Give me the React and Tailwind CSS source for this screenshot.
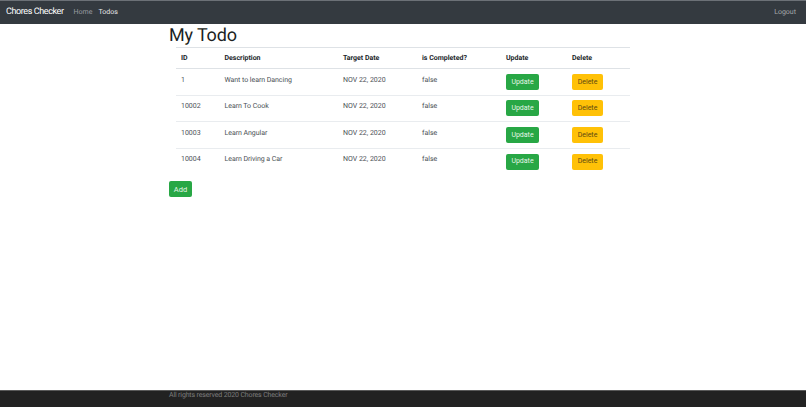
const rows = [
  ["1", "Want to learn Dancing"],
  ["10002", "Learn To Cook"],
  ["10003", "Learn Angular"],
  ["10004", "Learn Driving a Car"],
];

const heads = [
  ["ID", "w-[43.5px]"],
  ["Description", "w-[118.5px]"],
  ["Target Date", "w-[79px]"],
  ["is Completed?", "w-[84px]"],
  ["Update", "w-[66px]"],
  ["Delete", "w-[63px]"],
];

export default function App() {
  return (
    <div className="flex h-[407px] flex-col overflow-hidden bg-white font-['Roboto','Noto_Sans',sans-serif] text-[#212529] [text-rendering:geometricPrecision]">
      <nav className="flex h-6 shrink-0 items-center border-t border-[#6c7177] bg-[#343a40] pl-[6px] pr-[10px]">
        <span className="mr-[10px] text-[9px] tracking-[-0.4px] text-white">Chores Checker</span>
        <a className="mr-[6px] text-[7px] text-[#9a9da0]">Home</a>
        <a className="text-[7px] text-[#e4e5e6]">Todos</a>
        <a className="ml-auto text-[7px] text-[#a5a8ab]">Logout</a>
      </nav>

      <main className="ml-[169px] w-[461px] flex-1">
        <h1 className="h-[23px] text-[18px] leading-[23px] tracking-[-0.15px] text-[#1c1f23]">My Todo</h1>
        <table className="ml-[7px] w-[454px] table-fixed border-collapse text-[7px]">
          <thead>
            <tr className="h-[21px] border-y border-[#dee2e6]">
              {heads.map(([h, w]) => (
                <th key={h} className={`${w} pl-[5px] text-left font-bold text-[#212529]`}>{h}</th>
              ))}
            </tr>
          </thead>
          <tbody>
            {rows.map(([id, d], i) => (
              <tr key={id} className={`${i === 3 ? "h-[26px]" : "h-[26.67px]"} ${i === 3 ? "" : "border-b border-[#e9ecef]"} text-[#4a4f54]`}>
                <td className="pb-1 pl-[5px]">{id}</td>
                <td className="pb-1 pl-[5px] tracking-[-0.05px]">{d}</td>
                <td className="pb-1 pl-[5px]">NOV 22, 2020</td>
                <td className="pb-1 pl-[5px]">false</td>
                <td className="pl-[5px]">
                  <button className="flex h-4 w-[33px] items-center justify-center rounded-[2px] bg-[#28a745] text-[#e6f5e9]">Update</button>
                </td>
                <td className="pl-[5px]">
                  <button className="flex h-4 w-[31px] items-center justify-center rounded-[2px] bg-[#ffc107] text-[#5c4a12]">Delete</button>
                </td>
              </tr>
            ))}
          </tbody>
        </table>
        <button className="mt-[7px] flex h-4 w-[23px] items-center justify-center rounded-[2px] bg-[#28a745] text-[7.5px] text-[#e6f5e9]">Add</button>
      </main>

      <footer className="h-[17px] shrink-0 border-t border-[#5a5a5a] bg-[#222222] pl-[169px] text-[7px] leading-[9px] tracking-[-0.15px] text-[#7d7d7d]">
        All rights reserved 2020 Chores Checker
      </footer>
    </div>
  );
}
